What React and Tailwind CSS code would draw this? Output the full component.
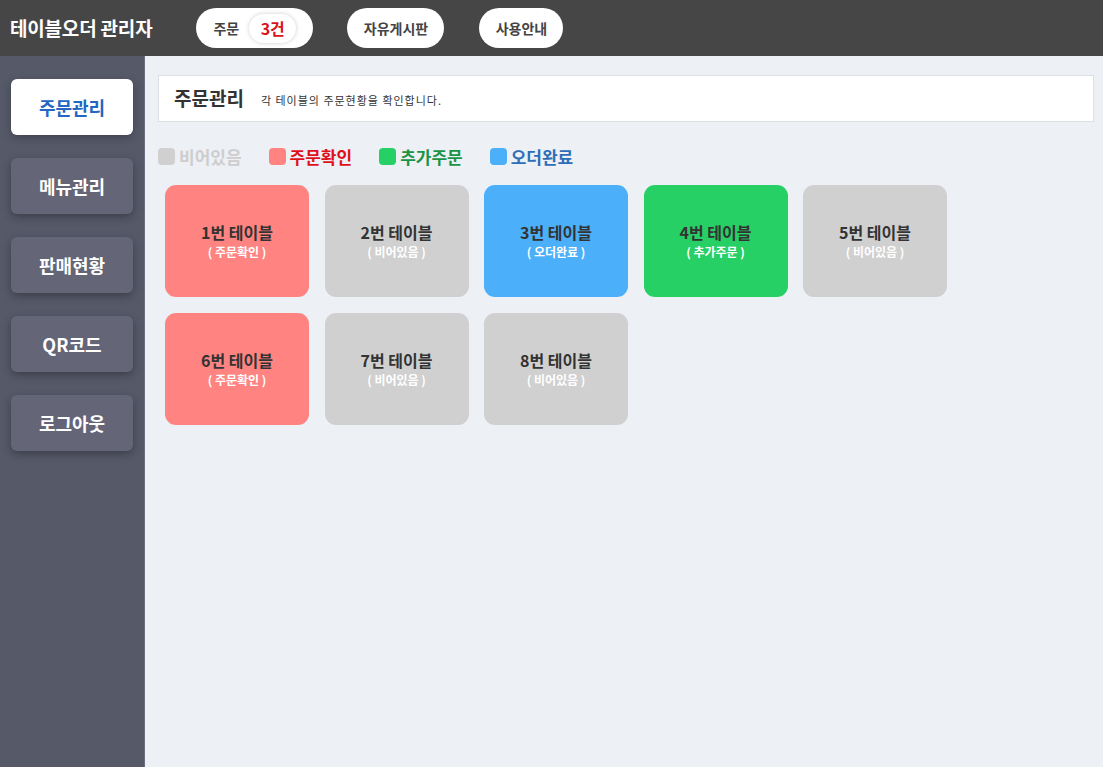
const tables = [
  { no: 1, status: "주문확인" },
  { no: 2, status: "비어있음" },
  { no: 3, status: "오더완료" },
  { no: 4, status: "추가주문" },
  { no: 5, status: "비어있음" },
  { no: 6, status: "주문확인" },
  { no: 7, status: "비어있음" },
  { no: 8, status: "비어있음" },
];

const cardColor = {
  비어있음: "bg-[#d0d0d0]",
  주문확인: "bg-[#ff8481]",
  추가주문: "bg-[#26d065]",
  오더완료: "bg-[#4baffa]",
};

const legend = [
  { label: "비어있음", box: "bg-[#d0d0d0]", text: "text-[#cdcdcd]" },
  { label: "주문확인", box: "bg-[#ff8481]", text: "text-[#e0101a]" },
  { label: "추가주문", box: "bg-[#26d065]", text: "text-[#1b9445]" },
  { label: "오더완료", box: "bg-[#4baffa]", text: "text-[#2c6fb8]" },
];

const menus = ["주문관리", "메뉴관리", "판매현황", "QR코드", "로그아웃"];

const App = () => {
  return (
    <div
      className="flex h-[767px] flex-col bg-[#edf0f5]"
      style={{ fontFamily: '"Noto Sans CJK KR", "Noto Sans", sans-serif' }}
    >
      <header className="flex h-14 shrink-0 items-center bg-[#464646] pl-[10px]">
        <h1 className="text-[19px] font-bold tracking-[-0.01em] text-white">테이블오더 관리자</h1>
        <div className="ml-[44px] flex h-10 w-[117px] items-center rounded-full bg-white pl-[17px]">
          <span className="text-[14px] font-bold text-[#444]">주문</span>
          <span className="ml-[10px] flex h-[29px] w-[47px] items-center justify-center rounded-full bg-white text-[16px] font-bold text-[#d9121c] shadow-[0_0_4px_rgba(0,0,0,0.2)]">
            3건
          </span>
        </div>
        <button className="ml-[34px] h-10 w-[97px] rounded-full bg-white text-[14px] font-bold text-[#444]">
          자유게시판
        </button>
        <button className="ml-[35px] h-10 w-[84px] rounded-full bg-white text-[14px] font-bold text-[#444]">
          사용안내
        </button>
      </header>

      <div className="flex flex-1">
        <aside className="flex w-[145px] shrink-0 flex-col gap-[23px] border-r border-[#6c6f80] bg-[#565968] px-[11px] pt-[23px]">
          {menus.map((menu, i) => (
            <button
              key={menu}
              className={
                i === 0
                  ? "h-14 w-[122px] rounded-md bg-white text-[18px] font-bold text-[#2566c2] shadow-[0_3px_8px_rgba(0,0,0,0.25)]"
                  : "h-14 w-[122px] rounded-md bg-[#646577] text-[18px] font-bold text-white shadow-[0_3px_8px_rgba(0,0,0,0.3)]"
              }
            >
              {menu}
            </button>
          ))}
        </aside>

        <main className="flex-1 pl-[13px] pr-[9px] pt-[19px]">
          <div className="flex h-[47px] items-center border border-[#dcdfe4] bg-white pl-[15px]">
            <h2 className="text-[19px] font-bold text-[#333]">주문관리</h2>
            <p className="ml-[17px] mt-[4px] text-[11px] tracking-[0.09em] text-[#333]">
              각 테이블의 주문현황을 확인합니다.
            </p>
          </div>

          <div className="mt-[22px] flex items-center">
            {legend.map((item, i) => (
              <div key={item.label} className={i === 0 ? "flex items-center" : "ml-[27px] flex items-center"}>
                <span className={`h-[17px] w-[17px] rounded-[4px] ${item.box}`} />
                <span className={`ml-[4px] text-[17px] font-semibold ${item.text}`}>{item.label}</span>
              </div>
            ))}
          </div>

          <div className="mt-[15px] grid grid-cols-[repeat(5,144px)] gap-x-[15.5px] gap-y-4 pl-[7px]">
            {tables.map((t) => (
              <div
                key={t.no}
                className={`flex h-[112px] flex-col items-center justify-center rounded-[11px] ${cardColor[t.status]}`}
              >
                <span className="text-[16px] font-bold leading-[22px] text-[#333]">{t.no}번 테이블</span>
                <span className="text-[12px] font-bold leading-[18px] text-white">( {t.status} )</span>
              </div>
            ))}
          </div>
        </main>
      </div>
    </div>
  );
};

export default App;
